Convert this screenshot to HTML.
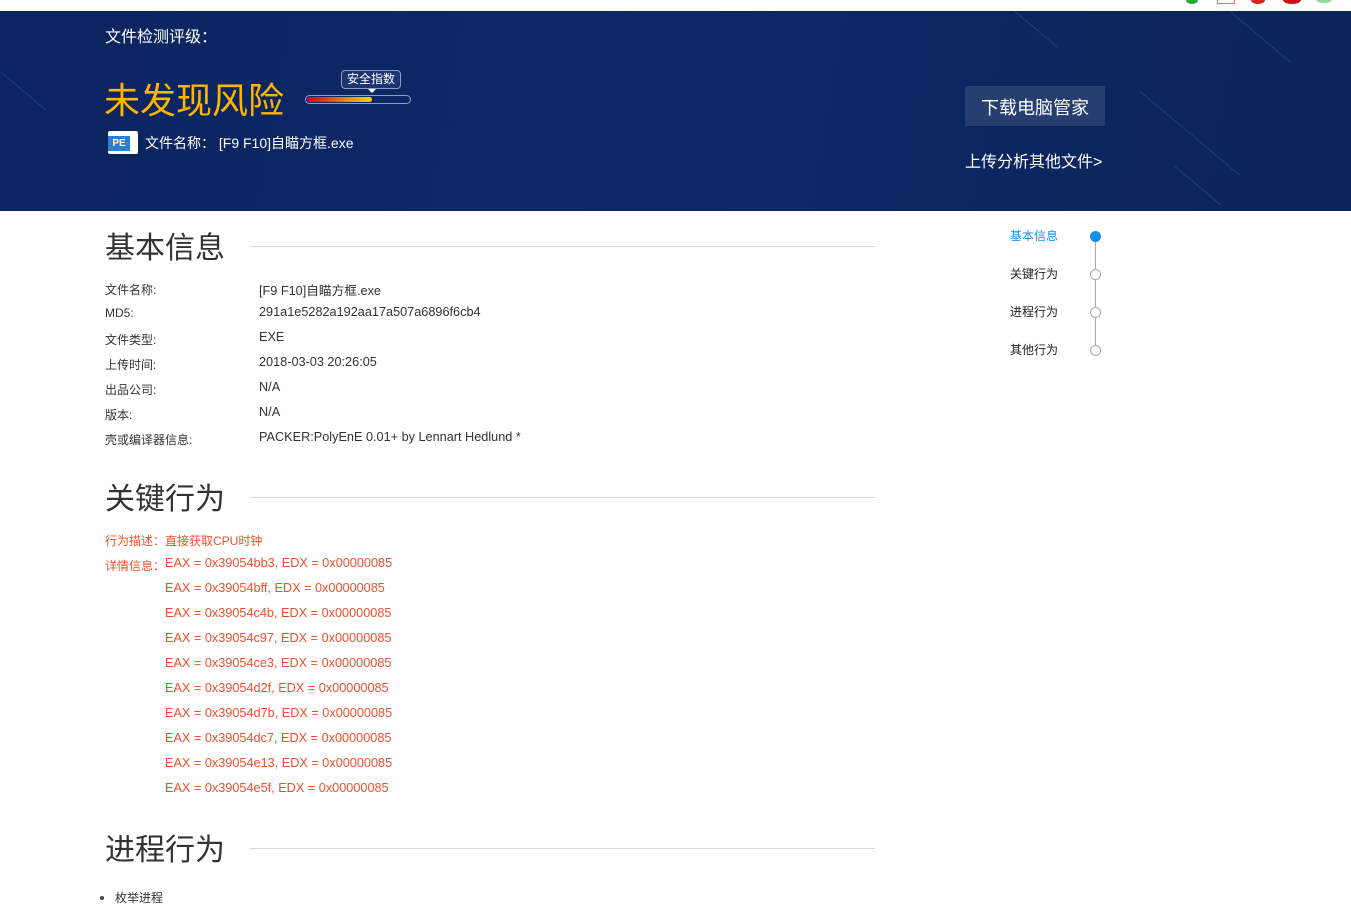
<!DOCTYPE html>
<html><head><meta charset="utf-8"><style>
*{margin:0;padding:0;box-sizing:border-box}
body{width:1351px;height:915px;overflow:hidden;background:#fff;font-family:"Liberation Sans","Noto Sans CJK SC",sans-serif;color:#333;position:relative}
.a{position:absolute;white-space:nowrap}
.banner{position:absolute;left:0;top:11px;width:1351px;height:200px;background:linear-gradient(100deg,#0c2460 0%,#0d2a66 50%,#0b2459 100%);overflow:hidden}
.streak{position:absolute;height:1px;background:rgba(90,140,220,.25);transform-origin:left center}
.h2{position:absolute;font-size:30px;color:#333;left:105px}
.hr{position:absolute;left:250px;width:625px;height:1px;background:#d8d8d8}
.lab{left:105px;font-size:12px;color:#333}
.val{left:259px;font-size:12.7px;color:#333}
.red{color:#f0502d;font-size:12.7px}
.nav{left:1010px;font-size:12px;color:#222}
.dot{position:absolute;left:1090px;width:11px;height:11px;border-radius:50%;border:1px solid #aaa;background:#fff}
</style></head><body>
<div class="a" style="left:1186px;top:-4px;width:12px;height:8px;border-radius:50%;background:#22aa33"></div>
<div class="a" style="left:1217px;top:-2px;width:18px;height:6px;border:1px solid #f07050;border-top:none"></div>
<div class="a" style="left:1251px;top:-4px;width:14px;height:8px;border-radius:50%;background:#dd2222"></div>
<div class="a" style="left:1283px;top:-4px;width:18px;height:8px;border-radius:50%;background:#cc1111"></div>
<div class="a" style="left:1316px;top:-4px;width:16px;height:7px;border-radius:50%;background:#8fd89a"></div>
<div class="banner">
 <div class="streak" style="left:0;top:60px;width:60px;transform:rotate(40deg)"></div>
 <div class="streak" style="left:1015px;top:0;width:55px;transform:rotate(40deg)"></div>
 <div class="streak" style="left:1230px;top:0;width:80px;transform:rotate(40deg)"></div>
 <div class="streak" style="left:1140px;top:80px;width:130px;transform:rotate(40deg)"></div>
 <div class="streak" style="left:1175px;top:155px;width:60px;transform:rotate(40deg)"></div>
</div>
<div class="a" style="left:105px;top:23px;font-size:16px;color:#fff">文件检测评级：</div>
<div class="a" style="left:104px;top:76px;font-size:36px;color:#ffb400;line-height:50px">未发现风险</div>
<div class="a" style="left:341px;top:70px;width:60px;height:19px;border:1px solid #8ea0c0;border-radius:4px;background:#1c3470;color:#fff;font-size:12px;text-align:center;line-height:17px">安全指数</div>
<div class="a" style="left:368px;top:89px;width:0;height:0;border-left:4px solid transparent;border-right:4px solid transparent;border-top:4px solid #fff"></div>
<div class="a" style="left:305px;top:95px;width:106px;height:9px;border:1px solid #8ea0c0;border-radius:5px;background:#0d2a66"></div>
<div class="a" style="left:307px;top:97px;width:65px;height:5px;border-radius:3px;background:linear-gradient(90deg,#e00000,#ffd400)"></div>
<div class="a" style="left:108px;top:131px;width:30px;height:23px;background:#fff;border-radius:2px"></div>
<div class="a" style="left:108px;top:136px;width:22px;height:15px;background:#2a7fd4;color:#fff;font-size:10px;font-weight:bold;text-align:center;line-height:15px">PE</div>
<div class="a" style="left:145px;top:133px;font-size:14px;color:#fff">文件名称：&nbsp;[F9 F10]自瞄方框.exe</div>
<div class="a" style="left:965px;top:86px;width:140px;height:40px;background:#263e72;color:#fff;font-size:18px;text-align:center;line-height:44px">下载电脑管家</div>
<div class="a" style="left:965px;top:148px;font-size:16px;color:#fff">上传分析其他文件&gt;</div>

<div class="h2" style="top:223px">基本信息</div><div class="hr" style="top:246px"></div>
<div class="a lab" style="top:281px">文件名称:</div><div class="a val" style="top:280px">[F9 F10]自瞄方框.exe</div>
<div class="a lab" style="top:306px">MD5:</div><div class="a val" style="top:305px">291a1e5282a192aa17a507a6896f6cb4</div>
<div class="a lab" style="top:331px">文件类型:</div><div class="a val" style="top:330px">EXE</div>
<div class="a lab" style="top:356px">上传时间:</div><div class="a val" style="top:355px">2018-03-03 20:26:05</div>
<div class="a lab" style="top:381px">出品公司:</div><div class="a val" style="top:380px">N/A</div>
<div class="a lab" style="top:406px">版本:</div><div class="a val" style="top:405px">N/A</div>
<div class="a lab" style="top:431px">壳或编译器信息:</div><div class="a val" style="top:430px">PACKER:PolyEnE 0.01+ by Lennart Hedlund *</div>

<div class="h2" style="top:474px">关键行为</div><div class="hr" style="top:497px"></div>
<div class="a red" style="left:105px;top:532px;font-size:12px">行为描述：直接获取CPU时钟</div>
<div class="a red" style="left:105px;top:557px;font-size:12px">详情信息：</div>
<div class="a red" style="left:165px;top:556px">EAX = 0x39054bb3, EDX = 0x00000085</div>
<div class="a red" style="left:165px;top:581px">EAX = 0x39054bff, EDX = 0x00000085</div>
<div class="a red" style="left:165px;top:606px">EAX = 0x39054c4b, EDX = 0x00000085</div>
<div class="a red" style="left:165px;top:631px">EAX = 0x39054c97, EDX = 0x00000085</div>
<div class="a red" style="left:165px;top:656px">EAX = 0x39054ce3, EDX = 0x00000085</div>
<div class="a red" style="left:165px;top:681px">EAX = 0x39054d2f, EDX = 0x00000085</div>
<div class="a red" style="left:165px;top:706px">EAX = 0x39054d7b, EDX = 0x00000085</div>
<div class="a red" style="left:165px;top:731px">EAX = 0x39054dc7, EDX = 0x00000085</div>
<div class="a red" style="left:165px;top:756px">EAX = 0x39054e13, EDX = 0x00000085</div>
<div class="a red" style="left:165px;top:781px">EAX = 0x39054e5f, EDX = 0x00000085</div>

<div class="h2" style="top:825px">进程行为</div><div class="hr" style="top:848px"></div>
<div class="a" style="left:100px;top:896px;width:4px;height:4px;border-radius:50%;background:#444"></div>
<div class="a" style="left:115px;top:889px;font-size:12px">枚举进程</div>

<div class="a" style="left:1095px;top:236px;width:1px;height:114px;background:#aaa"></div>
<div class="a nav" style="top:227px;color:#1a8ee0">基本信息</div>
<div class="a nav" style="top:265px">关键行为</div>
<div class="a nav" style="top:303px">进程行为</div>
<div class="a nav" style="top:341px">其他行为</div>
<div class="dot" style="top:231px;background:#1591e8;border-color:#1591e8"></div>
<div class="dot" style="top:269px"></div>
<div class="dot" style="top:307px"></div>
<div class="dot" style="top:345px"></div>
</body></html>
